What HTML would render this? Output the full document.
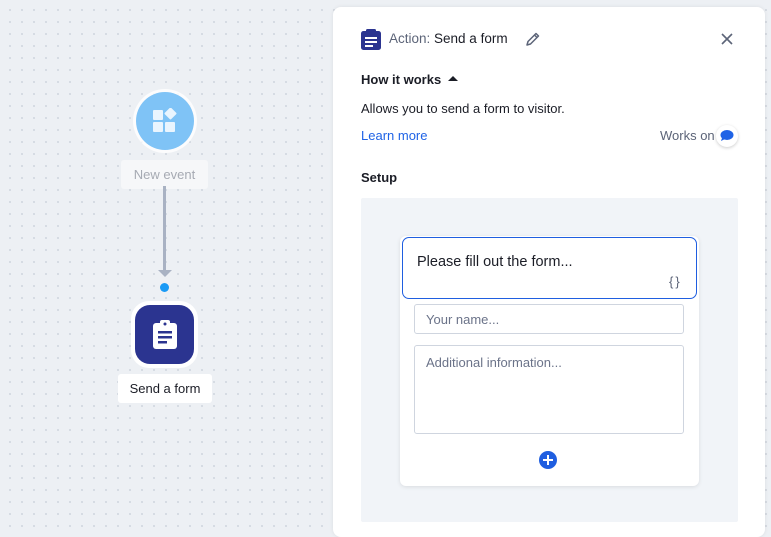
<!DOCTYPE html>
<html><head><style>
*{margin:0;padding:0;box-sizing:border-box}
body{width:771px;height:528px;overflow:hidden;background:#edf0f4;font-family:"Liberation Sans",sans-serif;position:relative;
background-image:radial-gradient(circle,#d3d8e0 0.9px,transparent 1.2px);background-size:12px 12px;background-position:4px 4px}
.abs{position:absolute}
.panel{left:333px;top:7px;width:432px;height:530px;background:#fff;border-radius:8px;box-shadow:0 0 4px rgba(0,0,0,.08)}
.t{position:absolute;white-space:nowrap;color:#1b1d26}
</style></head><body>
<div class="abs" style="left:133px;top:89px;width:64px;height:64px;border-radius:50%;background:#fff;opacity:.8"></div>
<div class="abs" style="left:136px;top:92px;width:58px;height:58px;border-radius:50%;background:#7fc3f6"></div>
<svg class="abs" style="left:152px;top:108px" width="26" height="26" viewBox="0 0 26 26"><rect x="1" y="2" width="10" height="10" rx="1" fill="#eaf5fe"/><rect x="1" y="14" width="10" height="10" rx="1" fill="#eaf5fe"/><rect x="13" y="14" width="10" height="10" rx="1" fill="#eaf5fe"/><rect x="14" y="1" width="9" height="9" rx="1" fill="#eaf5fe" transform="rotate(45 18.5 5.5)"/></svg>
<div class="abs" style="left:121px;top:160px;width:87px;height:29px;background:#f6f7f9;border-radius:3px;color:#a6aab3;font-size:13px;text-align:center;line-height:29px">New event</div>
<div class="abs" style="left:163px;top:186px;width:3px;height:86px;background:#a9b2c3"></div>
<div class="abs" style="left:158px;top:270px;width:0;height:0;border-left:7px solid transparent;border-right:7px solid transparent;border-top:7px solid #a9b2c3"></div>
<div class="abs" style="left:160px;top:283px;width:9px;height:9px;border-radius:50%;background:#1a9af5"></div>
<div class="abs" style="left:131px;top:301px;width:67px;height:67px;border-radius:18px;background:#fff"></div>
<div class="abs" style="left:135px;top:305px;width:59px;height:59px;border-radius:15px;background:#2b3490"></div>
<svg class="abs" style="left:152px;top:320px" width="26" height="30" viewBox="0 0 26 30"><rect x="1" y="3" width="24" height="26" rx="3" fill="#fff"/><rect x="8" y="0" width="10" height="6" rx="2" fill="#fff"/><circle cx="13" cy="4" r="1.5" fill="#2b3490"/><rect x="6" y="11" width="14" height="2.5" fill="#2b3490"/><rect x="6" y="16" width="14" height="2.5" fill="#2b3490"/><rect x="6" y="21" width="9" height="2.5" fill="#2b3490"/></svg>
<div class="abs" style="left:118px;top:374px;width:94px;height:29px;background:#fff;border-radius:3px;color:#1b1d26;font-size:13px;text-align:center;line-height:29px">Send a form</div>
<div class="abs panel"></div>
<svg class="abs" style="left:361px;top:29px" width="20" height="21" viewBox="0 0 20 21"><rect x="0" y="2" width="20" height="19" rx="2.5" fill="#2b3490"/><rect x="5" y="0" width="10" height="5" rx="1.5" fill="#2b3490"/><rect x="4" y="8" width="12" height="2" fill="#fff"/><rect x="4" y="12" width="12" height="2" fill="#fff"/><rect x="4" y="16" width="8" height="2" fill="#fff"/></svg>
<div class="t" style="left:389px;top:31px;font-size:13.5px"><span style="color:#5c6478">Action:</span> Send a form</div>
<svg class="abs" style="left:525px;top:31px" width="16" height="16" viewBox="0 0 16 16"><path d="M2 14 L3 10.5 L11 2.5 L13.5 5 L5.5 13 Z M9.5 4 L12 6.5" fill="none" stroke="#5c6478" stroke-width="1.5" stroke-linejoin="round"/></svg>
<svg class="abs" style="left:721px;top:33px" width="12" height="12" viewBox="0 0 12 12"><path d="M1 1L11 11M11 1L1 11" stroke="#5c6478" stroke-width="1.6"/></svg>
<div class="t" style="left:361px;top:72px;font-size:13px;font-weight:600;color:#1b1d26">How it works<span style="display:inline-block;margin-left:7px;vertical-align:3px;width:0;height:0;border-left:5px solid transparent;border-right:5px solid transparent;border-bottom:5px solid #1b1d26"></span></div>
<div class="t" style="left:361px;top:101px;font-size:13px">Allows you to send a form to visitor.</div>
<div class="t" style="left:361px;top:128px;font-size:13px;color:#1f63e6">Learn more</div>
<div class="t" style="left:660px;top:128px;font-size:13px;color:#5c6478">Works on</div>
<div class="abs" style="left:716px;top:125px;width:22px;height:22px;border-radius:50%;background:#fff;box-shadow:0 1px 3px rgba(0,0,0,.2)"></div>
<svg class="abs" style="left:720px;top:129px" width="14" height="13" viewBox="0 0 14 13"><ellipse cx="7" cy="6" rx="6.5" ry="5" fill="#1f63e6"/><path d="M2 9 L1 12 L5 10Z" fill="#1f63e6"/></svg>
<div class="t" style="left:361px;top:170px;font-size:13px;font-weight:600">Setup</div>
<div class="abs" style="left:361px;top:198px;width:377px;height:324px;background:#f1f4f8;border-radius:2px"></div>
<div class="abs" style="left:400px;top:236px;width:299px;height:250px;background:#fff;border-radius:6px;box-shadow:0 1px 4px rgba(0,0,0,.1)"></div>
<div class="abs" style="left:402px;top:237px;width:295px;height:62px;border:1px solid #1f5ee0;border-radius:7px;background:#fff"></div>
<div class="t" style="left:417px;top:254px;font-size:14.5px">Please fill out the form...</div>
<div class="t" style="left:669px;top:274px;font-size:13px;color:#5c6478;letter-spacing:2px">{}</div>
<div class="abs" style="left:414px;top:304px;width:270px;height:30px;border:1px solid #cfd5df;border-radius:3px"></div>
<div class="t" style="left:426px;top:312px;font-size:13px;color:#6b7389">Your name...</div>
<div class="abs" style="left:414px;top:345px;width:270px;height:89px;border:1px solid #cfd5df;border-radius:3px"></div>
<div class="t" style="left:426px;top:355px;font-size:13px;color:#6b7389">Additional information...</div>
<div class="abs" style="left:539px;top:451px;width:18px;height:18px;border-radius:50%;background:#1f5ee0"></div>
<div class="abs" style="left:543px;top:459px;width:10px;height:2px;background:#fff"></div>
<div class="abs" style="left:547px;top:455px;width:2px;height:10px;background:#fff"></div>
</body></html>
